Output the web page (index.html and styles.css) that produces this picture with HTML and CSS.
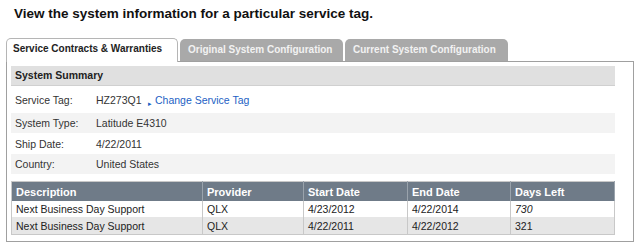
FILE: index.html
```html
<!DOCTYPE html>
<html lang="en">
<head>
    <meta charset="UTF-8">
    <title>System Information</title>
    <link rel="stylesheet" href="styles.css">
</head>
<body>
    <h1 class="page-title">View the system information for a particular service tag.</h1>
    <div class="tabs">
        <div class="tab active">Service Contracts &amp; Warranties</div>
        <div class="tab">Original System Configuration</div>
        <div class="tab">Current System Configuration</div>
    </div>
    <div class="panel">
        <div class="summary-head">System Summary</div>
        <div class="summary-row first">
            <span class="label">Service Tag:</span>
            <span class="value tag">HZ273Q1</span>
            <a href="#" class="change-link"><span class="arrow">&#9656;</span>Change Service Tag</a>
        </div>
        <div class="summary-row shade">
            <span class="label">System Type:</span>
            <span class="value">Latitude E4310</span>
        </div>
        <div class="summary-row tall">
            <span class="label">Ship Date:</span>
            <span class="value">4/22/2011</span>
        </div>
        <div class="summary-row shade">
            <span class="label">Country:</span>
            <span class="value">United States</span>
        </div>
        <table class="warranty">
            <thead>
                <tr>
                    <th class="c-desc">Description</th>
                    <th class="c-prov">Provider</th>
                    <th class="c-start">Start Date</th>
                    <th class="c-end">End Date</th>
                    <th>Days Left</th>
                </tr>
            </thead>
            <tbody>
                <tr>
                    <td>Next Business Day Support</td>
                    <td>QLX</td>
                    <td>4/23/2012</td>
                    <td>4/22/2014</td>
                    <td><em>730</em></td>
                </tr>
                <tr class="alt">
                    <td>Next Business Day Support</td>
                    <td>QLX</td>
                    <td>4/22/2011</td>
                    <td>4/22/2012</td>
                    <td>321</td>
                </tr>
            </tbody>
        </table>
    </div>
</body>
</html>
```

FILE: styles.css
```css
body {
    font-family: "Liberation Sans", Arial, sans-serif;
    margin: 0;
    padding: 0;
    background-color: white;
    color: #222;
}
.page-title {
    font-size: 13.5px;
    line-height: 16px;
    margin: 0;
    padding: 6px 14px 0;
    color: #111;
}
.tabs {
    display: flex;
    align-items: flex-end;
    margin: 16px 0 0 6px;
    height: 23px;
}
.tab {
    font-size: 10px;
    font-weight: bold;
    white-space: nowrap;
    height: 22px;
    line-height: 21px;
    width: 163px;
    margin-left: 2px;
    padding: 0 8px;
    background-color: #a9a9a9;
    color: #f2f2f2;
    border-radius: 5px 5px 0 0;
    box-sizing: border-box;
}
.tab.active {
    height: 24px;
    line-height: 20px;
    width: 172px;
    margin-left: 0;
    padding: 0 6px;
    background-color: white;
    color: #222;
    border: 1px solid #b5b5b5;
    border-bottom: none;
    margin-bottom: -1px;
    position: relative;
    z-index: 1;
}
.panel {
    margin-left: 6px;
    width: 628px;
    height: 181px;
    border: 1px solid #a0a0a0;
    box-sizing: border-box;
    padding: 4px 0 0 4px;
    overflow: hidden;
}
.summary-head {
    width: 604px;
    height: 20px;
    line-height: 18px;
    background-color: #e0e0e0;
    border-bottom: 1px solid #d0d0d0;
    box-sizing: border-box;
    font-size: 10.5px;
    font-weight: bold;
    padding-left: 4px;
    color: #222;
}
.summary-row {
    display: flex;
    align-items: center;
    width: 604px;
    height: 20px;
    font-size: 10.5px;
    padding-left: 4px;
    box-sizing: border-box;
    color: #333;
    white-space: nowrap;
}
.summary-row.first {
    height: 27px;
}
.summary-row.tall {
    height: 21px;
}
.summary-row.shade {
    background-color: #f3f3f3;
}
.label {
    width: 81px;
}
.value.tag {
    width: 52px;
}
.change-link {
    color: #1c5fc4;
    text-decoration: none;
    font-size: 10.5px;
}
.arrow {
    font-size: 7px;
    margin-right: 3px;
    position: relative;
    top: 2px;
}
.warranty {
    margin-top: 7px;
    width: 604px;
    border-collapse: collapse;
    border: 1px solid #c8c8c8;
    font-size: 10.5px;
    table-layout: fixed;
}
.warranty th {
    background-color: #6f7b88;
    color: white;
    text-align: left;
    font-size: 11px;
    height: 19px;
    padding: 0 4px;
    border-right: 1px solid #9aa3ac;
}
.warranty td {
    height: 16px;
    padding: 0 4px;
    border-right: 1px solid #c8c8c8;
    color: #222;
    white-space: nowrap;
}
.warranty tr.alt td {
    background-color: #e6e6e6;
    height: 17px;
}
.c-desc {
    width: 182px;
}
.c-prov {
    width: 92px;
}
.c-start {
    width: 95px;
}
.c-end {
    width: 94px;
}
```
